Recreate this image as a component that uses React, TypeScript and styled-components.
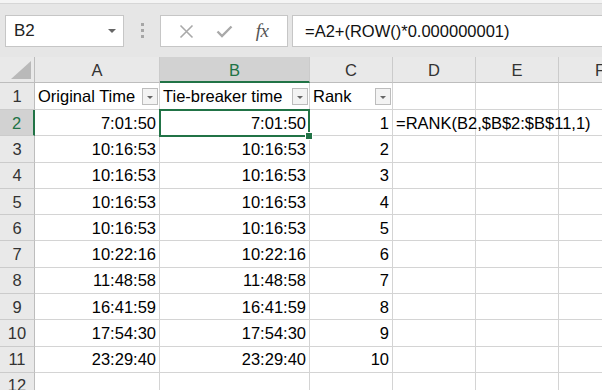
import React from "react";
import styled, { createGlobalStyle, css } from "styled-components";

const Global = createGlobalStyle`
  html, body { margin: 0; padding: 0; background: #ffffff; overflow: hidden; }
  body { font-family: "Liberation Sans", Arial, sans-serif; }
  * { box-sizing: border-box; }
`;

const GREEN = "#217346";

const Page = styled.div`
  width: 602px;
  height: 390px;
  overflow: hidden;
  display: flex;
  flex-direction: column;
`;

const TopStrip = styled.div`
  height: 4px;
  flex-shrink: 0;
  background: #f4f4f4;
  border-bottom: 1px solid #d6d6d6;
`;

const Toolbar = styled.div`
  height: 53px;
  background: #e6e6e6;
  display: flex;
  align-items: flex-start;
  padding: 11px 0 0 5px;
  flex-shrink: 0;
`;

const Box = styled.div<{ $w?: number; $grow?: boolean }>`
  height: 32px;
  background: #ffffff;
  border: 1px solid #c6c6c6;
  display: flex;
  align-items: center;
  ${(p) => (p.$w ? `width: ${p.$w}px; flex-shrink: 0;` : "")}
  ${(p) => (p.$grow ? "flex: 1;" : "")}
`;

const NameBox = styled(Box)`
  padding: 0 0 0 8px;
  justify-content: space-between;
  font-size: 17px;
  color: #222;
`;

const NameArrow = styled.span`
  width: 0;
  height: 0;
  margin-right: 7px;
  border-left: 4px solid transparent;
  border-right: 4px solid transparent;
  border-top: 4px solid #666;
`;

const Dots = styled.div`
  width: 36px;
  align-self: stretch;
  display: flex;
  flex-direction: column;
  align-items: center;
  justify-content: center;
  gap: 3px;
  padding-bottom: 11px;
  & > i {
    width: 3px;
    height: 3px;
    background: #a6a6a6;
    display: block;
  }
`;

const FxBox = styled(Box)`
  justify-content: space-around;
  padding: 0 6px;
  margin-right: 4px;
`;

const IconSlot = styled.span`
  width: 30px;
  display: flex;
  justify-content: center;
  align-items: center;
`;

const FxText = styled.span`
  font-family: "Liberation Serif", "Times New Roman", serif;
  font-style: italic;
  font-size: 19px;
  color: #555;
  letter-spacing: -0.5px;
`;

const FormulaBox = styled(Box)`
  padding-left: 12px;
  font-size: 16.5px;
  color: #111;
  border-right: none;
  white-space: nowrap;
`;

const Grid = styled.div`
  display: grid;
  flex-shrink: 0;
  grid-template-columns: 35px 125px 150px 83px 83px 83px 83px;
  grid-template-rows: 26px 27px repeat(10, 26.3px) 26px;
  width: 642px;
  font-size: 16.5px;
  line-height: 1.15;
`;

const Cell = styled.div<{ $align?: "left" | "right"; $selected?: boolean }>`
  position: relative;
  background: #ffffff;
  border-right: 1px solid #d4d4d4;
  border-bottom: 1px solid #d4d4d4;
  display: flex;
  align-items: center;
  justify-content: ${(p) => (p.$align === "right" ? "flex-end" : "flex-start")};
  padding: 1px 3px 0 3px;
  white-space: nowrap;
  color: #000;
  overflow: visible;
  ${(p) =>
    p.$selected &&
    css`
      z-index: 2;
      &::after {
        content: "";
        position: absolute;
        left: -1px;
        top: -1px;
        right: -1px;
        bottom: -2px;
        border: 2px solid ${GREEN};
        pointer-events: none;
      }
      &::before {
        content: "";
        position: absolute;
        right: -4px;
        bottom: -5px;
        width: 6px;
        height: 6px;
        background: ${GREEN};
        border: 1px solid #ffffff;
        z-index: 3;
      }
    `}
`;

const OverflowCell = styled(Cell)`
  z-index: 1;
  background: transparent;
`;

const HeaderCell = styled.div<{ $active?: boolean }>`
  background: ${(p) => (p.$active ? "#d2d2d2" : "#e9e9e9")};
  border-right: 1px solid #cbcbcb;
  border-bottom: ${(p) => (p.$active ? `2px solid ${GREEN}` : "1px solid #bdbdbd")};
  display: flex;
  align-items: center;
  justify-content: center;
  padding-top: 2px;
  color: ${(p) => (p.$active ? GREEN : "#333")};
`;

const RowHeader = styled.div<{ $active?: boolean }>`
  background: ${(p) => (p.$active ? "#d2d2d2" : "#e9e9e9")};
  border-right: ${(p) => (p.$active ? `2px solid ${GREEN}` : "1px solid #bdbdbd")};
  border-bottom: 1px solid #cbcbcb;
  display: flex;
  align-items: center;
  justify-content: center;
  padding-top: 1px;
  color: ${(p) => (p.$active ? GREEN : "#333")};
`;

const Corner = styled.div`
  background: #e9e9e9;
  border-right: 1px solid #bdbdbd;
  border-bottom: 1px solid #bdbdbd;
  display: flex;
  justify-content: flex-end;
  align-items: flex-end;
  padding: 0 3px 3px 0;
`;

const CornerTriangle = styled.span`
  width: 0;
  height: 0;
  border-left: 20px solid transparent;
  border-bottom: 18px solid #b9b9b9;
`;

const FilterCell = styled(Cell)`
  justify-content: space-between;
  padding-right: 1px;
`;

const FilterButton = styled.span`
  width: 16px;
  height: 17px;
  flex-shrink: 0;
  background: #f3f3f3;
  border: 1px solid #bdbdbd;
  display: flex;
  align-items: center;
  justify-content: center;
  &::after {
    content: "";
    width: 0;
    height: 0;
    border-left: 3.5px solid transparent;
    border-right: 3.5px solid transparent;
    border-top: 3.5px solid #666;
    margin-top: 1px;
  }
`;

const columns = ["A", "B", "C", "D", "E", "F"];

const times = [
  "7:01:50",
  "10:16:53",
  "10:16:53",
  "10:16:53",
  "10:16:53",
  "10:22:16",
  "11:48:58",
  "16:41:59",
  "17:54:30",
  "23:29:40",
];

export default function App() {
  return (
    <Page>
      <Global />
      <TopStrip />
      <Toolbar>
        <NameBox $w={119}>
          B2
          <NameArrow />
        </NameBox>
        <Dots>
          <i />
          <i />
          <i />
        </Dots>
        <FxBox $w={128}>
          <IconSlot>
            <svg width="15" height="15" viewBox="0 0 15 15">
              <path d="M1.5 1.5 L13.5 13.5 M13.5 1.5 L1.5 13.5" stroke="#a9a9a9" strokeWidth="1.6" fill="none" />
            </svg>
          </IconSlot>
          <IconSlot>
            <svg width="17" height="13" viewBox="0 0 17 13">
              <path d="M1.5 6.5 L6 11 L15.5 1.5" stroke="#a9a9a9" strokeWidth="2.4" fill="none" />
            </svg>
          </IconSlot>
          <IconSlot>
            <FxText>fx</FxText>
          </IconSlot>
        </FxBox>
        <FormulaBox $grow>=A2+(ROW()*0.000000001)</FormulaBox>
      </Toolbar>
      <Grid>
        <Corner>
          <CornerTriangle />
        </Corner>
        {columns.map((c) => (
          <HeaderCell key={c} $active={c === "B"}>
            {c}
          </HeaderCell>
        ))}

        <RowHeader>1</RowHeader>
        <FilterCell>
          Original Time
          <FilterButton />
        </FilterCell>
        <FilterCell>
          Tie-breaker time
          <FilterButton />
        </FilterCell>
        <FilterCell>
          Rank
          <FilterButton />
        </FilterCell>
        <Cell />
        <Cell />
        <Cell />

        {times.map((t, i) => {
          const row = i + 2;
          return (
            <React.Fragment key={row}>
              <RowHeader $active={row === 2}>{row}</RowHeader>
              <Cell $align="right">{t}</Cell>
              <Cell $align="right" $selected={row === 2}>
                {t}
              </Cell>
              <Cell $align="right">{i + 1}</Cell>
              {row === 2 ? <OverflowCell>=RANK(B2,$B$2:$B$11,1)</OverflowCell> : <Cell />}
              <Cell />
              <Cell />
            </React.Fragment>
          );
        })}

        <RowHeader>12</RowHeader>
        <Cell />
        <Cell />
        <Cell />
        <Cell />
        <Cell />
        <Cell />
      </Grid>
    </Page>
  );
}
